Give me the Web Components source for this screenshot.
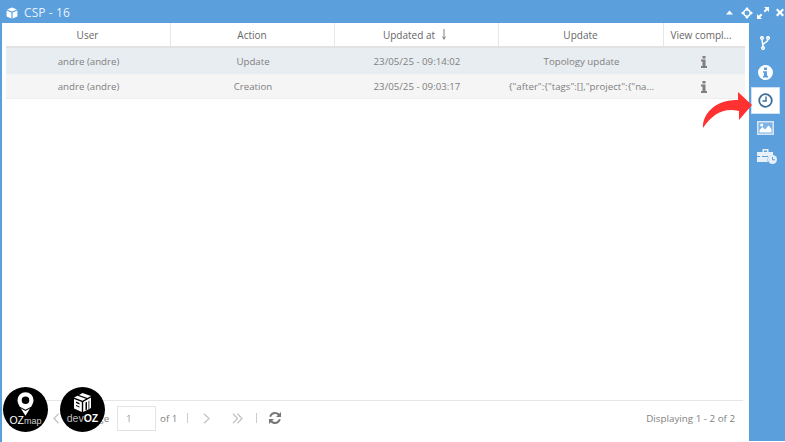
<!DOCTYPE html>
<html>
<head>
<meta charset="utf-8">
<title>CSP - 16</title>
<style>
  html, body { margin: 0; height: 100%; overflow: hidden; background: #fff; font-family: "Open Sans", sans-serif; }
</style>
</head>
<body>
<history-window label="CSP - 16">
  <history-grid></history-grid>
  <grid-pager slot="pager"></grid-pager>
  <side-tools slot="tools"></side-tools>
</history-window>
<brand-badges></brand-badges>
<red-arrow></red-arrow>

<script>
class HistoryWindow extends HTMLElement {
  constructor() {
    super();
    this.attachShadow({ mode: "open" });
    this.shadowRoot.innerHTML = `
    <style>
      :host { display: flex; flex-direction: column; width: 785px; height: 442px; background: #fff; box-sizing: border-box; }
      .bar { flex: 0 0 23px; display: flex; align-items: center; background: #5b9fdd; padding: 2px 1px 0 6px; box-sizing: border-box; }
      .bar .name { margin-left: 6px; flex: 1; color: #e9f2fa; font-size: 12px; letter-spacing: .1px; }
      .bar svg { display: block; }
      .ctl { display: flex; align-items: center; }
      .body { flex: 1; display: flex; min-height: 0; }
      .main { flex: 0 0 749px; background: #fff; display: flex; flex-direction: column; border-left: 2px solid #5b9fdd; padding-left: 4px; box-sizing: border-box; }
      .grid { flex: 1; min-height: 0; padding-right: 4px; }
      .tools { flex: 1; background: #5b9fdd; margin-bottom: 1px; }
    </style>
    <div class="bar">
      <svg width="12" height="12" viewBox="0 0 14 14"><path fill="#fff" d="M7 .5 12.800 2.800 7 5.200 1.200 2.800zM.7 4 6.300 6.300V13.500L.7 11zM13.300 4V11L7.700 13.500V6.300z"/></svg>
      <span class="name">${this.getAttribute("label")}</span>
      <span class="ctl">
        <svg width="7" height="5" viewBox="0 0 9 6"><path fill="#fff" d="M4.500 .5 9 5.500H0z"/></svg>
        <svg style="margin-left:8px" width="12" height="12" viewBox="0 0 13 13"><path fill="#fff" d="M6.500 0 8.500 2.300H7.600C9 2.700 10.300 4 10.700 5.400V4.500L13 6.500 10.700 8.500V7.600C10.300 9 9 10.300 7.600 10.700H8.500L6.500 13 4.500 10.700H5.400C4 10.300 2.700 9 2.300 7.600V8.500L0 6.500 2.300 4.500V5.400C2.700 4 4 2.700 5.400 2.300H4.500zM6.500 3.800A2.700 2.700 0 1 0 6.500 9.200 2.700 2.700 0 0 0 6.500 3.800z"/></svg>
        <svg style="margin-left:4px" width="12" height="12" viewBox="0 0 12 12"><path fill="#fff" d="M7 0H12V5L10.200 3.200 8 5.400 6.600 4 8.800 1.800zM5 12H0V7L1.800 8.800 4 6.600 5.400 8 3.200 10.200z"/></svg>
        <svg style="margin-left:7px" width="8" height="9" viewBox="0 0 9 9"><path fill="#fff" d="M1.700 0 4.500 2.700 7.300 0 9 1.700 6.200 4.500 9 7.300 7.300 9 4.500 6.300 1.700 9 0 7.300 2.800 4.500 0 1.700z"/></svg>
      </span>
    </div>
    <div class="body">
      <div class="main">
        <div class="grid"><slot></slot></div>
        <slot name="pager"></slot>
      </div>
      <div class="tools"><slot name="tools"></slot></div>
    </div>`;
  }
}
customElements.define("history-window", HistoryWindow);

class HistoryGrid extends HTMLElement {
  constructor() {
    super();
    this.attachShadow({ mode: "open" });
    const rows = [
      ["andre (andre)", "Update", "23/05/25 - 09:14:02", "Topology update"],
      ["andre (andre)", "Creation", "23/05/25 - 09:03:17", '{"after":{"tags":[],"project":{"na...']
    ];
    const info = `<svg width="6" height="12" viewBox="0 0 6 12"><path fill="#7f7f7f" d="M1.500 0H4.500V2.400H1.500zM0 3.600H4.500V10H6V12H0V10H1.500V5.600H0z"/></svg>`;
    const rowHtml = rows.map((r, i) => `
      <div class="row ${i === 0 ? "sel" : "alt"}">
        ${r.map(c => `<div class="cell">${c}</div>`).join("")}
        <div class="cell ico">${info}</div>
      </div>`).join("");
    this.shadowRoot.innerHTML = `
    <style>
      :host { display: block; font-size: 9.700px; color: #808080; }
      .row, .head { display: grid; grid-template-columns: 165px 164px 164px 165px 81px; }
      .head { height: 25px; color: #666; border-bottom: 2px solid #e2e2e2; box-sizing: border-box; font-size: 10px; }
      .head div { display: flex; align-items: center; justify-content: center; border-right: 1px solid #e6e6e6; gap: 6px; white-space: nowrap; padding-right: 1px; }
      .head div.sorted { padding-right: 3px; }
      .head div:last-child { border-right: 0; padding-right: 7px; }
      .row { height: 26px; align-items: center; box-sizing: border-box; padding-top: 1px; }
      .alt { height: 25px; border-bottom: 1px solid #eee; }
      .sel { background: #e8edf1; }
      .alt { background: #f5f5f5; }
      .cell { text-align: center; white-space: nowrap; overflow: hidden; }
      .ico { display: flex; justify-content: center; padding-right: 1px; }
    </style>
    <div class="head">
      <div>User</div><div>Action</div>
      <div class="sorted">Updated at <svg width="6" height="11" viewBox="0 0 6 11"><path fill="#808080" d="M2.500 0H3.500V8.500L5.500 6.800 3 11 .5 6.800 2.500 8.500z"/></svg></div>
      <div>Update</div><div>View compl...</div>
    </div>
    ${rowHtml}`;
  }
}
customElements.define("history-grid", HistoryGrid);

class GridPager extends HTMLElement {
  constructor() {
    super();
    this.attachShadow({ mode: "open" });
    this.shadowRoot.innerHTML = `
    <style>
      :host { display: flex; align-items: center; height: 42px; margin-right: 6px; border-top: 1px solid #e6e6e6; box-sizing: border-box; font-size: 9.800px; color: #808080; padding: 0 0 7px 47px; }
      .input { width: 39px; height: 25px; border: 1px solid #e3e3e3; box-sizing: border-box; display: flex; align-items: center; padding-left: 8px; margin-left: 9px; color: #999; }
      .of { margin-left: 4px; }
      /* the devOZ badge lies over this label, only its last letter shows */
      .page { margin-left: 28px; width: 21px; white-space: nowrap; }
      .sep { width: 1px; height: 10px; background: #ccc; }
      .btn { display: block; }
      .spacer { flex: 1; }
      .info { margin-right: 8px; }
    </style>
    <svg class="btn" width="6" height="11" viewBox="0 0 6 11"><path fill="none" stroke="#c4c4c4" stroke-width="1.300" d="M5.500 .8 1 5.500 5.500 10.200"/></svg>
    <span class="page">Page</span>
    <div class="input">1</div>
    <span class="of">of 1</span>
    <span class="sep" style="margin-left:10px"></span>
    <svg class="btn" style="margin-left:15px" width="7" height="11" viewBox="0 0 7 11"><path fill="none" stroke="#c4c4c4" stroke-width="1.300" d="M1 .8 6 5.500 1 10.200"/></svg>
    <svg class="btn" style="margin-left:22px" width="11" height="11" viewBox="0 0 11 11"><path fill="none" stroke="#c4c4c4" stroke-width="1.300" d="M1 .8 5.500 5.500 1 10.200M5.500 .8 10 5.500 5.500 10.200"/></svg>
    <span class="sep" style="margin-left:13px"></span>
    <svg class="btn" style="margin-left:12px" width="12" height="12" viewBox="0 0 12 12"><path fill="#777" d="M6 0C7.700 0 9.200.7 10.200 1.800L12 0V5H7L8.800 3.200C8.100 2.500 7.100 2 6 2 4.200 2 2.700 3.200 2.200 4.900L.2 4.600C.9 2 3.200 0 6 0zM0 12V7H5L3.200 8.800C3.900 9.500 4.900 10 6 10 7.800 10 9.300 8.800 9.800 7.100L11.800 7.400C11.100 10 8.800 12 6 12 4.300 12 2.800 11.300 1.800 10.200z"/></svg>
    <span class="spacer"></span>
    <span class="info">Displaying 1 - 2 of 2</span>`;
  }
}
customElements.define("grid-pager", GridPager);

class SideTools extends HTMLElement {
  constructor() {
    super();
    this.attachShadow({ mode: "open" });
    this.shadowRoot.innerHTML = `
    <style>
      :host { display: flex; flex-direction: column; align-items: center; padding: 5.500px 4px 0 0; box-sizing: border-box; }
      .t { width: 32px; height: 29px; flex: none; display: flex; align-items: center; justify-content: center; box-sizing: border-box; }
      .on { background: #fff; border: 1px solid #cfe0f2; width: 29px; height: 27px; margin-top: .5px; }
    </style>
    <div class="t"><svg width="10" height="14" viewBox="0 0 10 14"><g fill="none" stroke="#fff" stroke-width="1.500"><circle cx="2" cy="2" r="1.300"/><circle cx="8" cy="2" r="1.300"/><circle cx="3" cy="12" r="1.300"/><path d="M2 3.500 3 10.500M8 3.500C8 6.500 3.500 6 3 9"/></g></svg></div>
    <div class="t"><svg width="15" height="15" viewBox="0 0 15 15"><path fill="#fff" fill-rule="evenodd" d="M7.500 0A7.500 7.500 0 1 1 7.500 15 7.500 7.500 0 0 1 7.500 0zM6 2.500V5H9V2.500zM5 6.200V7.800H6V10.800H5V12.500H10V10.800H9V6.200z"/></svg></div>
    <div class="t on"><svg width="15" height="15" viewBox="0 0 15 15"><g fill="none" stroke="#3e6d9c"><circle cx="7.500" cy="7.500" r="6.300" stroke-width="1.800"/><path stroke-width="1.400" d="M8 3.500V8H4.500"/></g></svg></div>
    <div class="t" style="height:28px"><svg width="17" height="14" viewBox="0 0 17 14"><rect width="17" height="14" fill="#d6e6f6"/><rect x="1.500" y="1.500" width="14" height="11" fill="#7db3e6"/><path fill="#fff" d="M2.500 11.500V9L5.500 6 8 8.500 11.500 4.500 14.500 8V11.500z"/><circle cx="4.700" cy="4" r="1.500" fill="#fff"/></svg></div>
    <div class="t"><svg style="margin-left:3px" width="20" height="15" viewBox="0 0 20 15"><path fill="#e8f1fa" fill-rule="evenodd" d="M5.500 0H11.500V3H16V6A5 5 0 0 0 11 13H0V3H5.500zM7 1.500V3H10V1.500z"/><path fill="#5b9fdd" d="M0 7H11V8H0z"/><path fill="#e8f1fa" d="M3 6H5V9H3z"/><circle cx="15.500" cy="10.500" r="4.500" fill="#e8f1fa"/><path fill="none" stroke="#5b9fdd" d="M15.500 8V10.800H18"/></svg></div>`;
  }
}
customElements.define("side-tools", SideTools);

class BrandBadges extends HTMLElement {
  constructor() {
    super();
    this.attachShadow({ mode: "open" });
    this.shadowRoot.innerHTML = `
    <style>
      :host { position: absolute; left: 3px; top: 387px; display: flex; gap: 12px; font-family: "Liberation Sans", sans-serif; color: #fff; }
      .b { width: 45px; height: 45px; border-radius: 50%; background: #000; display: flex; flex-direction: column; align-items: center; box-sizing: border-box; }
      .b svg { display: block; }
      .t { white-space: nowrap; }
      .oz { padding-top: 5px; }
      .oz svg { margin-bottom: -1px; }
      .oz .t { font-size: 10.500px; line-height: 10px; }
      .oz .t i { font-style: normal; font-size: 9px; color: #cfcfcf; }
      .dv { padding-top: 6px; }
      .dv .t { font-size: 10.500px; line-height: 12px; color: #bdbdbd; }
      .dv b { color: #fff; }
    </style>
    <div class="b oz">
      <svg width="17" height="24" viewBox="0 0 18 25"><path fill="#fff" fill-rule="evenodd" d="M9 0A8.500 8.500 0 0 1 17.500 8.500C17.500 13 13 18 9 25 5 18 .5 13 .5 8.500A8.500 8.500 0 0 1 9 0zM9 4.500A4 4 0 1 0 9 12.500 4 4 0 0 0 9 4.500z"/><path fill="#000" d="M3 15.500 9 18.500 15 15.500 15 16.500 9 20 3 16.500z"/></svg>
      <span class="t">OZ<i>map</i></span>
    </div>
    <div class="b dv">
      <svg width="19" height="19" viewBox="0 0 19 19"><path fill="#fff" d="M9.500 0 18 3 14.500 5 6 2zM4.500 2.700 13 5.800 9.500 7.700 1 4.500zM1 6 8.800 9V19L1 15.500zM10.200 9 18 4.500V15L10.200 19z"/><path fill="#000" d="M12.500 9.500 14 8.700V16.500L12.500 17.200zM15.500 8 16.300 7.500V15.500L15.500 16zM3 8.500 6.500 10V11.500L3 10zM3 12 6.500 13.500V14.500L3 13z"/></svg>
      <span class="t">dev<b>OZ</b></span>
    </div>`;
  }
}
customElements.define("brand-badges", BrandBadges);

class RedArrow extends HTMLElement {
  constructor() {
    super();
    this.attachShadow({ mode: "open" });
    this.shadowRoot.innerHTML = `
    <style>
      :host { position: absolute; left: 702px; top: 92px; width: 51px; height: 37px; }
      svg { display: block; }
    </style>
    <svg width="51" height="37" viewBox="0 0 51 37"><path fill="#ff3131" d="M1 36C0 22 14 7 36 8L36 0 50 13 37 28 37 19C22 15 10 22 1 36z"/></svg>`;
  }
}
customElements.define("red-arrow", RedArrow);
</script>
</body>
</html>
